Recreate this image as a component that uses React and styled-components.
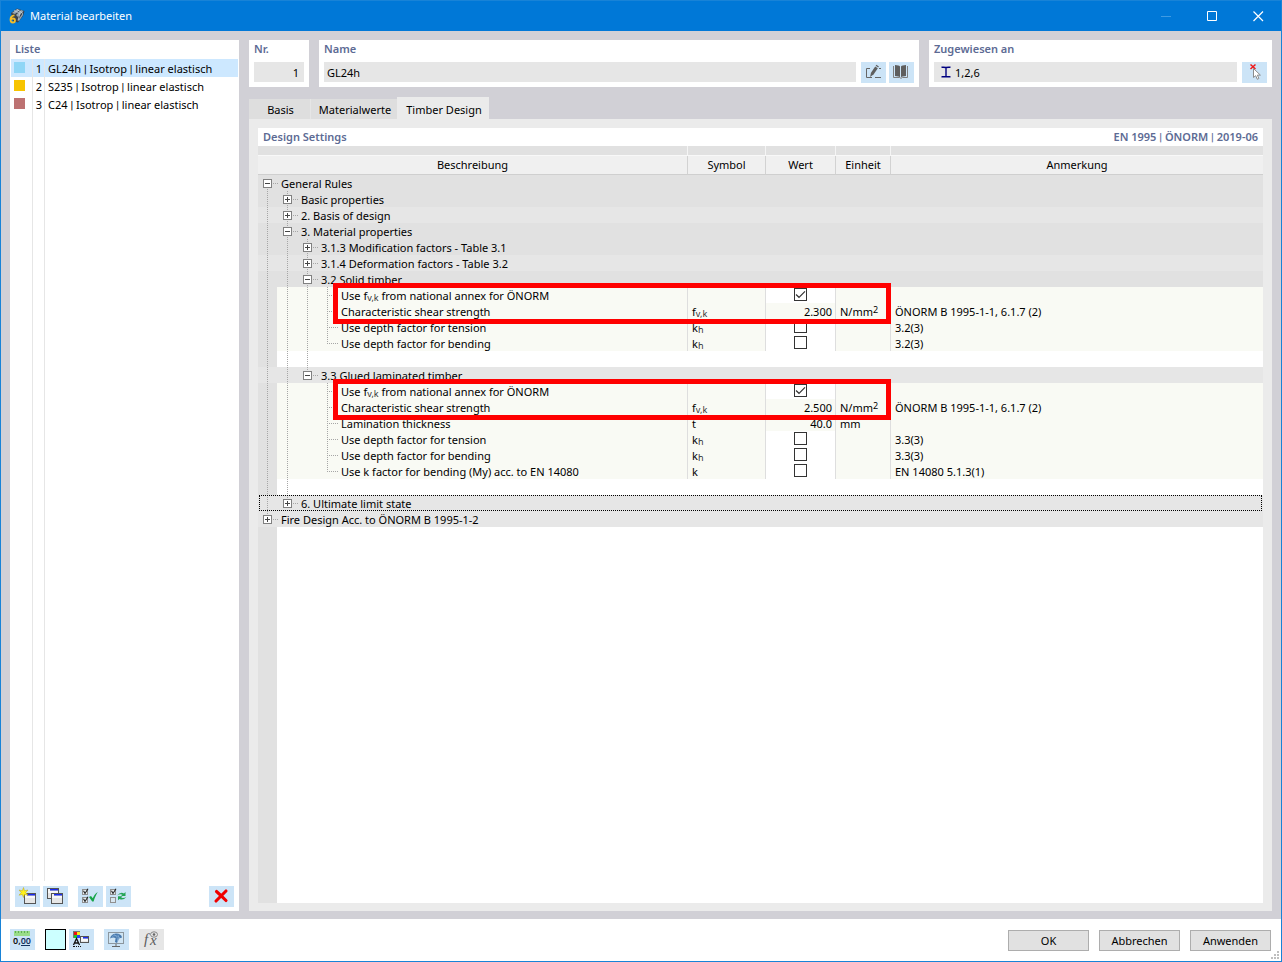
import React from "react";
import styled, { createGlobalStyle, css } from "styled-components";

const GlobalStyle = createGlobalStyle`
  * { box-sizing: border-box; }
  body { margin: 0; }
  body, button, input, table {
    font-family: "Noto Sans", "Open Sans", sans-serif;
    font-size: 11px;
    line-height: 16px;
    color: #000;
  }
`;

const c = {
  frame: "#1883d7",
  title: "#0078d7",
  desk: "#d1d0d6",
  field: "#e6e6e6",
  group: "#e1e1e1",
  groupLight: "#e6e6e6",
  leaf: "#f9faf4",
  tool: "#cce4f7",
  caption: "#5d6b94",
  line: "#dedede",
  dot: "#a6a6a6",
};

/* ---------- window ---------- */
const Window = styled.div`
  display: flex;
  flex-direction: column;
  min-height: 100vh;
  border: 1px solid ${c.frame};
  background: #fff;
`;
const TitleBar = styled.header`
  display: flex;
  align-items: center;
  height: 30px;
  padding-left: 8px;
  background: ${c.title};
  color: #fff;
`;
const TitleText = styled.h1`
  flex: 1;
  margin: 0 0 0 5px;
  font-size: 11px;
  font-weight: 400;
`;
const WindowButton = styled.button`
  display: grid;
  place-items: center;
  width: 46px;
  height: 30px;
  padding: 0;
  border: 0;
  background: transparent;
`;
const Body = styled.main`
  display: flex;
  flex: 1;
  gap: 10px;
  padding: 9px 9px 8px;
  background: ${c.desk};
`;
const Caption = styled.h2`
  margin: 0;
  font-size: 11px;
  font-weight: 600;
  line-height: 18px;
  color: ${c.caption};
`;
/* The bar of Noto Sans is very wide; Roboto has a narrow one. */
const Bar = styled.span`
  font-family: Roboto, sans-serif;
  line-height: 0;
`;

/* ---------- material list ---------- */
const ListPanel = styled.aside`
  display: flex;
  flex-direction: column;
  flex: none;
  width: 229px;
  background: #fff;
`;
const ListCaption = styled(Caption)`
  padding: 0 5px;
  margin-bottom: 1px;
`;
const List = styled.ul`
  flex: 1;
  margin: 0 1px;
  padding: 0;
  list-style: none;
  background:
    linear-gradient(${c.field}, ${c.field}) 21px 0 / 1px 100% no-repeat,
    linear-gradient(${c.field}, ${c.field}) 33px 0 / 1px 100% no-repeat;
`;
const ListItem = styled.li`
  display: grid;
  grid-template-columns: 22px 12px 1fr;
  height: 18px;
  line-height: 20px;
  background: ${(p) => (p.$selected ? "#cde8ff" : "transparent")};
`;
const SwatchCell = styled.span`
  padding: 3px 0 0 3px;
  border-right: 1px solid ${c.field};
`;
const Swatch = styled.span`
  display: block;
  width: 11px;
  height: 11px;
  background: ${(p) => p.$color};
`;
const NumberCell = styled.span`
  padding-right: 2px;
  border-right: 1px solid ${c.field};
  text-align: right;
`;
const NameCell = styled.span`
  padding-left: 3px;
  white-space: nowrap;
`;
const ListTools = styled.div`
  display: flex;
  gap: 3px;
  padding: 5px 5px 4px;
`;
const ToolGap = styled.span`
  width: ${(p) => p.$w}px;
`;
const Spacer = styled.span`
  flex: 1;
`;
const ToolButton = styled.button`
  flex: none;
  width: 25px;
  height: 21px;
  padding: 0;
  border: 0;
  background: ${(p) => (p.disabled ? c.field : c.tool)};
  svg { display: block; }
`;

/* ---------- right side ---------- */
const Content = styled.div`
  display: flex;
  flex: 1;
  flex-direction: column;
  min-width: 0;
`;
const Cards = styled.div`
  display: flex;
  gap: 10px;
  margin-bottom: 10px;
`;
const Card = styled.section`
  flex: ${(p) => p.$flex};
  min-width: 0;
  height: 47px;
  padding: 0 5px;
  background: #fff;
`;
const CardLabel = styled.label`
  display: block;
  margin-bottom: 4px;
  font-weight: 600;
  line-height: 18px;
  color: ${c.caption};
`;
const FieldRow = styled.div`
  display: flex;
  gap: 3px;
`;
const Field = styled.div`
  display: flex;
  flex: 1;
  align-items: center;
  gap: 4px;
  min-width: 0;
  height: 20px;
  margin-right: ${(p) => (p.$last ? 0 : 2)}px;
  padding: 0 ${(p) => p.$pad || 3}px;
  background: ${c.field};
`;
const FieldInput = styled.input`
  flex: 1;
  width: 100%;
  min-width: 0;
  height: 20px;
  padding: 1px 0 0;
  border: 0;
  outline: 0;
  background: transparent;
  text-align: ${(p) => (p.$right ? "right" : "left")};
`;
const Tabs = styled.div`
  display: flex;
  align-items: flex-end;
  height: 22px;
`;
const Tab = styled.button`
  width: ${(p) => p.$w}px;
  height: ${(p) => (p.$active ? 22 : 20)}px;
  padding: ${(p) => (p.$active ? 4 : 2)}px 0 0 2px;
  border: 0;
  border-right: ${(p) => (p.$divider ? `1px solid ${c.field}` : 0)};
  background: ${(p) => (p.$active ? "#ebebeb" : "#dedede")};
  line-height: 16px;
  white-space: nowrap;
`;
const TabPanel = styled.section`
  display: flex;
  flex: 1;
  flex-direction: column;
  padding: 9px 9px 8px;
  background: #ebebeb;
`;
const PanelHead = styled.div`
  display: flex;
  justify-content: space-between;
  padding: 0 5px;
  background: #fff;
`;

/* ---------- settings table ---------- */
const Grid = styled.table`
  width: 100%;
  table-layout: fixed;
  border-collapse: separate;
  border-spacing: 0;
  td, th { padding: 0; }
`;
const Col = styled.col`
  width: ${(p) => (p.$w ? `${p.$w}px` : "auto")};
`;
const BandCell = styled.td`
  height: 10px;
  border-right: 1px solid #f5f5f5;
  border-bottom: 1px solid #f8f8f8;
  background: ${c.group};
  line-height: 0;
  &:last-child { border-right: 0; }
`;
const HeadCell = styled.th`
  height: 19px;
  border-right: 1px solid #d2d2d2;
  border-bottom: 1px solid #cfcfcf;
  background: #f0f0f0;
  font-weight: 400;
  line-height: 18px;
  &:last-child { border-right: 0; }
`;
const GroupCell = styled.td`
  height: 16px;
  background: ${(p) => (p.$light ? c.groupLight : c.group)};
`;
const gutter = (fill) => css`
  background: linear-gradient(to right, ${c.group} 19px, ${fill} 19px);
`;
const BlankCell = styled.td`
  height: 16px;
  ${gutter("#fff")}
`;
const NameTd = styled.td`
  position: relative;
  height: 16px;
  border-right: 1px solid ${c.line};
  ${gutter(c.leaf)}
`;
const Td = styled.td`
  height: 16px;
  border-right: ${(p) => (p.$last ? "0" : `1px solid ${c.line}`)};
  background: ${(p) => (p.$edit ? "#fff" : c.leaf)};
  text-align: ${(p) => p.$align || "left"};
`;
const CellText = styled.div`
  height: 16px;
  padding: 1px 3px 0 4px;
  line-height: 16px;
  white-space: nowrap;
`;
/* The focus frame stays one pixel inside the row on both sides. */
const TreeLine = styled.div`
  display: flex;
  height: 16px;
  white-space: nowrap;
  ${(p) => p.$focus && css`
    margin: 0 1px;
    outline: 1px dotted #000;
    outline-offset: -1px;
    > :first-child {
      margin-left: -1px;
    }
  `}
`;
const TreeText = styled.span`
  padding: 1px 0 0 3px;
  line-height: 16px;
`;
const vDots = `repeating-linear-gradient(to bottom, ${c.dot} 0 1px, transparent 1px 2px)`;
const hDots = `repeating-linear-gradient(to right, ${c.dot} 0 1px, transparent 1px 2px)`;
const guideBackground = {
  "|": `${vDots} 9px 0 / 1px 16px no-repeat`,
  " ": "none",
  T: `${vDots} 9px 0 / 1px 16px no-repeat, ${hDots} 9px 8px / 11px 1px no-repeat`,
  L: `${vDots} 9px 0 / 1px 9px no-repeat, ${hDots} 9px 8px / 11px 1px no-repeat`,
  first: `${vDots} 9px 8px / 1px 8px no-repeat, ${hDots} 15px 8px / 5px 1px no-repeat`,
  middle: `${vDots} 9px 0 / 1px 16px no-repeat, ${hDots} 15px 8px / 5px 1px no-repeat`,
  last: `${vDots} 9px 0 / 1px 8px no-repeat, ${hDots} 15px 8px / 5px 1px no-repeat`,
};
const Guide = styled.span`
  flex: none;
  width: 20px;
  height: 16px;
  padding: 4px 0 0 5px;
  background: ${(p) => guideBackground[p.$kind]};
`;
const Expander = styled.button`
  display: block;
  width: 9px;
  height: 9px;
  padding: 0;
  border: 1px solid #808080;
  background:
    linear-gradient(#444, #444) 1px 3px / 5px 1px no-repeat,
    ${(p) => (p.$open ? "" : "linear-gradient(#444, #444) 3px 1px / 1px 5px no-repeat,")}
    linear-gradient(#fff, #fff);
`;
const Sub = styled.sub`
  position: relative;
  top: 1px;
  font-size: 9px;
  line-height: 0;
  vertical-align: baseline;
  color: #333;
`;
const Sup = styled.sup`
  position: relative;
  top: -3px;
  font-size: 9px;
  line-height: 0;
  vertical-align: baseline;
`;
const CheckBox = styled.span`
  display: grid;
  justify-content: center;
  height: 16px;
  padding-top: 1px;
  input, svg { grid-area: 1 / 1; }
  input {
    appearance: none;
    width: 13px;
    height: 13px;
    margin: 0;
    border: 1px solid #333;
    background: #fff;
  }
  svg { pointer-events: none; }
`;
/* Marks two rows, from the name column to the end of the unit column. */
const Highlight = styled.span`
  position: absolute;
  z-index: 1;
  top: -4px;
  left: 75px;
  width: 558px;
  height: 41px;
  border: 5px solid #f00;
  pointer-events: none;
`;
const Filler = styled.div`
  flex: 1;
  ${gutter("#fff")}
`;

/* ---------- footer ---------- */
const Footer = styled.footer`
  display: flex;
  align-items: flex-start;
  height: 42px;
  padding: 10px 2px 0 9px;
  background: #fff;
`;
const ColorButton = styled.button`
  width: 21px;
  height: 21px;
  margin-right: 3px;
  padding: 0;
  border: 1px solid #000;
  background: #cff;
`;
const Actions = styled.div`
  display: flex;
  gap: 10px;
  padding-top: 1px;
`;
const ActionButton = styled.button`
  width: 81px;
  height: 21px;
  padding: 1px 0 0;
  border: 1px solid #adadad;
  background: #e1e1e1;
  line-height: 16px;
`;
const Grip = styled.svg`
  align-self: flex-end;
  margin-bottom: 2px;
`;

/* ---------- icons ---------- */
const Icon = ({ children }) => (
  <svg width="25" height="21" viewBox="0 0 25 21" aria-hidden="true">{children}</svg>
);
const MiniWindow = ({ x, y, w = 12, h = 11 }) => (
  <g shapeRendering="crispEdges">
    <rect x={x} y={y} width={w} height={h} fill="#555" />
    <rect x={x + 1} y={y + 1} width={w - 2} height={h - 2} fill="#e6e6e6" />
    <rect x={x + 1} y={y + 1} width={w - 2} height="2" fill="#7d86d8" />
    <rect x={x + 3} y={y + 1} width={w - 4} height="1" fill="#1c2cf0" />
    <rect x={x + 1} y={y + 1} width="2" height="2" fill="#f4f4f4" />
    <rect x={x + 1} y={y + 3} width={w - 2} height="2" fill="#f8f8f8" />
  </g>
);
const TinyBox = ({ y, on }) => (
  <g>
    <rect x="4.5" y={y + 0.5} width="5" height="5" fill={on ? "#e8eef2" : "#d7e6f0"} stroke="#909090" />
    {on && <path d={`M5.5 ${y + 1.800}l1.500 2.700l3-4.700`} fill="none" stroke="#222" strokeWidth="1.100" />}
  </g>
);
const NewIcon = () => (
  <Icon>
    <MiniWindow x={9} y={7} />
    <path d="M8.500 1.500l1 3.300l3.500-.8l-2.300 2.500l2.300 2.700l-3.500-.8l-1 3.100l-1.200-3.100l-3.300.8l2.200-2.700l-2.200-2.500l3.300.8z" fill="#fff21a" stroke="#b8a020" strokeWidth=".5" />
  </Icon>
);
const CopyIcon = () => (
  <Icon><MiniWindow x={4} y={2} /><MiniWindow x={8} y={7} /></Icon>
);
const CheckAllIcon = () => (
  <Icon>
    <TinyBox y={3} on /><TinyBox y={11} on />
    <path d="M11 11l2-1l1.800 2.300c1-2.600 2.500-4.800 4.900-6.300c-1.700 2.900-3 5.800-4.100 9.500h-1.400z" fill="#17a54a" />
  </Icon>
);
const ToggleIcon = () => (
  <Icon>
    <TinyBox y={3} on /><TinyBox y={11} />
    <path d="M11 9.500q3.500-4 7-2l1.500-1.500v4h-4.500l1.500-1.300q-2.500-1-5.500.8zM20.500 10.700q-3 4-7 2.300l-1.500 1.300v-4h4.500l-1.400 1.300q2.500 1 5.400-.9z" fill="#23a455" />
  </Icon>
);
const DeleteIcon = () => (
  <Icon><path d="M7.500 5.500q4 3.500 9.500 9M17 5l-10 10" fill="none" stroke="#f00000" strokeWidth="3.100" strokeLinecap="round" /></Icon>
);
const EditIcon = () => (
  <Icon>
    <path d="M9 6.500H5.500v9H11M14 15.500h6M18 6.500h2" fill="none" stroke="#666" />
    <path d="M9 15l1-4.200l4.200-6.300l2.600 1.700l-4.300 6.400z" fill="#5e5e5e" />
    <path d="M14.700 3.700l.7-1l2.500 1.700l-.7 1z" fill="#5e5e5e" />
  </Icon>
);
const BookIcon = () => (
  <Icon>
    <path d="M4.500 4v11.500h6l1.500.8l1.500-.8h5V4" fill="none" stroke="#808080" />
    <path d="M6 3q4 0 5 1.500v11Q10 14 6 14zM17 3q-4 0-5 1.500v11Q13 14 17 14z" fill="#5e5e5e" />
  </Icon>
);
const PickIcon = () => (
  <Icon>
    <path d="M8.500 2.500l5 4.500M13.500 2.500l-5 4.500" stroke="#f01818" strokeWidth="1.500" />
    <path d="M11.500 6.500v9l2.200-1.800l1.600 3.600l1.600-.8l-1.500-3.400h3z" fill="#fff" stroke="#8c8c8c" />
  </Icon>
);
const SectionIcon = () => (
  <svg width="10" height="12" viewBox="0 0 10 12" aria-hidden="true">
    <path d="M.5 1.300Q3 1 5 1.500Q7 1 9.500 1.300M.5 10.700Q3 11 5 10.500Q7 11 9.500 10.700M5 1v10" fill="none" stroke="#000080" strokeWidth="1.400" />
  </svg>
);
const UnitsIcon = () => (
  <Icon>
    <rect x="4" y="2" width="16" height="5" fill="#98dc88" />
    <path d="M5.500 2v2M8.500 2v2M11.500 2v2M14.500 2v2M17.500 2v2" stroke="#5fae55" />
    <text x="3" y="15" fontSize="9" fontWeight="600" fill="#111">0,<tspan fill="#15315e">00</tspan></text>
    <path d="M11 16.500h9" stroke="#15315e" />
  </Icon>
);
const DisplayIcon = () => (
  <Icon>
    <g shapeRendering="crispEdges">
      <rect x="4" y="2" width="7" height="7" fill="#777" />
      <rect x="5" y="3" width="3" height="3" fill="#f01010" /><rect x="8" y="3" width="3" height="3" fill="#f6e91c" />
      <rect x="5" y="6" width="3" height="3" fill="#18c92d" /><rect x="8" y="6" width="3" height="3" fill="#2840ff" />
      <path d="M4 17h2v1h-2zM7 17h1v1h-1zM9 17h1v1h-1zM11 17h1v1h-1z" fill="#111" />
    </g>
    <path d="M4.500 16l3-6.500l3 6.500M5.500 14h4" fill="none" stroke="#111" strokeWidth="1.300" />
    <MiniWindow x={11} y={7} w={9} h={7} />
  </Icon>
);
const MonitorIcon = () => (
  <Icon>
    <rect x="4.500" y="3.500" width="15" height="11" fill="#d0e5f4" stroke="#8b969e" />
    <path d="M12 15v2M8 17.500h8" stroke="#666" />
    <path d="M6 9.500q1-4.500 6-5q5.500.3 6 4l-3 1l-2 4.500l-2-1l.6-4q-3-1-5.600.5z" fill="#4779ae" />
    <path d="M8 7.500q4-2.500 8 1.500M10 5.500q4 2 3.500 7M14 5.500q2 3-.5 7" fill="none" stroke="#90b7dc" strokeWidth=".6" />
  </Icon>
);
const FormulaIcon = () => (
  <Icon>
    <text x="5" y="15" fontSize="15" fontStyle="italic" fontFamily="Liberation Serif, serif" fill="#5c5c5c">f</text>
    <text x="11" y="16" fontSize="15" fontStyle="italic" fontFamily="Liberation Serif, serif" fill="#5c5c5c">x</text>
    <ellipse cx="15" cy="5.500" rx="3.500" ry="2.700" fill="none" stroke="#888" />
    <circle cx="15" cy="5.500" r="1.300" fill="#666" />
  </Icon>
);
const AppIcon = () => (
  <svg width="16" height="16" viewBox="0 0 16 16" aria-hidden="true">
    <path d="M2 5l6-4.500l7.500 2.500l-1.500 5l-5 6.500l-5-1.500z" fill="#39434e" />
    <path d="M3 5l5-4l3 1l-5 4zM7 7l5-5l2.500 1l-5.500 6zM9 12l5-7v2l-4 6z" fill="#98a7b4" />
    <path d="M5 2.500l6 3l-2 7M8 1.500l6 4" fill="none" stroke="#d4dbe0" strokeWidth=".7" />
    <path d="M5.500 7.300Q1.500 7.500 1.500 11.500Q1.500 14.500 3.800 14.500Q6 14.500 6 12.400Q6 10.500 4 10.500Q2.200 10.500 1.700 12" fill="none" stroke="#f3bd28" strokeWidth="1.800" />
  </svg>
);

/* ---------- data ---------- */
const materials = [
  { color: "#8fd6f6", name: "GL24h | Isotrop | linear elastisch", selected: true },
  { color: "#f7c400", name: "S235 | Isotrop | linear elastisch" },
  { color: "#bd7272", name: "C24 | Isotrop | linear elastisch" },
];
const fvk = <>f<Sub>v,k</Sub></>;
const kh = <>k<Sub>h</Sub></>;
const nmm = <>N/mm<Sup>2</Sup></>;
const annex = <>Use {fvk} from national annex for ÖNORM</>;
const rows = [
  { group: "General Rules", guides: "", node: "first", open: true },
  { group: "Basic properties", guides: "|", node: "middle" },
  { group: "2. Basis of design", guides: "|", node: "middle", light: true },
  { group: "3. Material properties", guides: "|", node: "middle", open: true },
  { group: "3.1.3 Modification factors - Table 3.1", guides: "||", node: "middle" },
  { group: "3.1.4 Deformation factors - Table 3.2", guides: "||", node: "middle", light: true },
  { group: "3.2 Solid timber", guides: "||", node: "middle", open: true },
  { name: annex, guides: "|||T", check: true, label: "Use fv,k from national annex, solid timber", mark: true },
  { name: "Characteristic shear strength", guides: "|||T", symbol: fvk, value: "2.300", unit: nmm, note: "ÖNORM B 1995-1-1, 6.1.7 (2)" },
  { name: "Use depth factor for tension", guides: "|||T", symbol: kh, check: false, label: "Use depth factor for tension, solid timber", note: "3.2(3)" },
  { name: "Use depth factor for bending", guides: "|||L", symbol: kh, check: false, label: "Use depth factor for bending, solid timber", note: "3.2(3)" },
  { blank: true, guides: "|||" },
  { group: "3.3 Glued laminated timber", guides: "||", node: "last", open: true, light: true },
  { name: annex, guides: "|| T", check: true, label: "Use fv,k from national annex, glued laminated timber", mark: true },
  { name: "Characteristic shear strength", guides: "|| T", symbol: fvk, value: "2.500", unit: nmm, note: "ÖNORM B 1995-1-1, 6.1.7 (2)" },
  { name: "Lamination thickness", guides: "|| T", symbol: "t", value: "40.0", unit: "mm" },
  { name: "Use depth factor for tension", guides: "|| T", symbol: kh, check: false, label: "Use depth factor for tension, glued laminated timber", note: "3.3(3)" },
  { name: "Use depth factor for bending", guides: "|| T", symbol: kh, check: false, label: "Use depth factor for bending, glued laminated timber", note: "3.3(3)" },
  { name: "Use k factor for bending (My) acc. to EN 14080", guides: "|| L", symbol: "k", check: false, label: "Use k factor for bending", note: "EN 14080 5.1.3(1)" },
  { blank: true, guides: "||" },
  { group: "6. Ultimate limit state", guides: "|", node: "last", light: true, focus: true },
  { group: "Fire Design Acc. to ÖNORM B 1995-1-2", guides: "", node: "last", light: true },
];

const Barred = ({ text }) =>
  text.split("|").map((part, i) => (
    <React.Fragment key={i}>{i > 0 && <Bar>|</Bar>}{part}</React.Fragment>
  ));

const Guides = ({ text }) => [...text].map((k, i) => <Guide key={i} $kind={k} />);

function SettingRow({ row }) {
  if (row.blank) {
    return <tr><BlankCell colSpan={5}><TreeLine><Guides text={row.guides} /></TreeLine></BlankCell></tr>;
  }
  if (row.group) {
    return (
      <tr>
        <GroupCell colSpan={5} $light={row.light}>
          <TreeLine $focus={row.focus}>
            <Guides text={row.guides} />
            <Guide $kind={row.node}>
              <Expander type="button" $open={row.open} aria-expanded={!!row.open} aria-label={row.group} />
            </Guide>
            <TreeText>{row.group}</TreeText>
          </TreeLine>
        </GroupCell>
      </tr>
    );
  }
  const hasCheck = row.check !== undefined;
  return (
    <tr>
      <NameTd>
        <TreeLine><Guides text={row.guides} /><TreeText>{row.name}</TreeText></TreeLine>
        {row.mark && <Highlight />}
      </NameTd>
      <Td><CellText>{row.symbol}</CellText></Td>
      <Td $edit={hasCheck} $align="right">
        {hasCheck ? (
          <CheckBox>
            <input type="checkbox" defaultChecked={row.check} aria-label={row.label} />
            {row.check && (
              <svg width="13" height="13" viewBox="0 0 13 13" aria-hidden="true">
                <path d="M2 6.500l3 2.800l6-6" fill="none" stroke="#333" strokeWidth="1.200" />
              </svg>
            )}
          </CheckBox>
        ) : <CellText>{row.value}</CellText>}
      </Td>
      <Td><CellText>{row.unit}</CellText></Td>
      <Td $last><CellText>{row.note}</CellText></Td>
    </tr>
  );
}

export default function App() {
  return (
    <>
      <GlobalStyle />
      <Window>
        <TitleBar>
          <AppIcon />
          <TitleText>Material bearbeiten</TitleText>
          <WindowButton aria-label="Minimieren" disabled>
            <svg width="11" height="11"><path d="M0 5.500h10" stroke="#3f9be3" /></svg>
          </WindowButton>
          <WindowButton aria-label="Maximieren">
            <svg width="11" height="11"><path d="M.5.500h9v9h-9z" fill="none" stroke="#fff" /></svg>
          </WindowButton>
          <WindowButton aria-label="Schließen">
            <svg width="11" height="11"><path d="M.5.500l9.500 9.500M10 .500l-9.500 9.500" stroke="#fff" strokeWidth="1.200" /></svg>
          </WindowButton>
        </TitleBar>

        <Body>
          <ListPanel>
            <ListCaption>Liste</ListCaption>
            <List>
              {materials.map((m, i) => (
                <ListItem key={m.name} $selected={m.selected}>
                  <SwatchCell><Swatch $color={m.color} /></SwatchCell>
                  <NumberCell>{i + 1}</NumberCell>
                  <NameCell><Barred text={m.name} /></NameCell>
                </ListItem>
              ))}
            </List>
            <ListTools>
              <ToolButton aria-label="Neu"><NewIcon /></ToolButton>
              <ToolButton aria-label="Kopieren"><CopyIcon /></ToolButton>
              <ToolGap $w={4} />
              <ToolButton aria-label="Alle auswählen"><CheckAllIcon /></ToolButton>
              <ToolButton aria-label="Auswahl umkehren"><ToggleIcon /></ToolButton>
              <Spacer />
              <ToolButton aria-label="Löschen"><DeleteIcon /></ToolButton>
            </ListTools>
          </ListPanel>

          <Content>
            <Cards>
              <Card $flex="0 0 60px">
                <CardLabel htmlFor="nr">Nr.</CardLabel>
                <FieldRow><Field $last $pad={5}><FieldInput id="nr" $right defaultValue="1" /></Field></FieldRow>
              </Card>
              <Card $flex="1 1 0">
                <CardLabel htmlFor="name">Name</CardLabel>
                <FieldRow>
                  <Field><FieldInput id="name" defaultValue="GL24h" /></Field>
                  <ToolButton aria-label="Name bearbeiten"><EditIcon /></ToolButton>
                  <ToolButton aria-label="Bibliothek"><BookIcon /></ToolButton>
                </FieldRow>
              </Card>
              <Card $flex="0 0 343px">
                <CardLabel htmlFor="assigned">Zugewiesen an</CardLabel>
                <FieldRow>
                  <Field $pad={7}><SectionIcon /><FieldInput id="assigned" defaultValue="1,2,6" /></Field>
                  <ToolButton aria-label="Auswählen"><PickIcon /></ToolButton>
                </FieldRow>
              </Card>
            </Cards>

            <Tabs role="tablist">
              <Tab role="tab" $w={62} $divider>Basis</Tab>
              <Tab role="tab" $w={86}>Materialwerte</Tab>
              <Tab role="tab" $w={92} $active aria-selected="true">Timber Design</Tab>
            </Tabs>
            <TabPanel>
              <PanelHead>
                <Caption>Design Settings</Caption>
                <Caption as="span"><Barred text="EN 1995 | ÖNORM | 2019-06" /></Caption>
              </PanelHead>
              <Grid>
                <colgroup>
                  <Col $w={430} /><Col $w={78} /><Col $w={70} /><Col $w={55} /><Col />
                </colgroup>
                <thead>
                  <tr><BandCell /><BandCell /><BandCell /><BandCell /><BandCell /></tr>
                  <tr>
                    <HeadCell>Beschreibung</HeadCell>
                    <HeadCell>Symbol</HeadCell>
                    <HeadCell>Wert</HeadCell>
                    <HeadCell>Einheit</HeadCell>
                    <HeadCell>Anmerkung</HeadCell>
                  </tr>
                </thead>
                <tbody>{rows.map((row, i) => <SettingRow key={i} row={row} />)}</tbody>
              </Grid>
              <Filler />
            </TabPanel>
          </Content>
        </Body>

        <Footer>
          <ToolButton aria-label="Einheiten"><UnitsIcon /></ToolButton>
          <ToolGap $w={10} />
          <ColorButton aria-label="Farbe" />
          <ToolButton aria-label="Anzeige"><DisplayIcon /></ToolButton>
          <ToolGap $w={10} />
          <ToolButton aria-label="Ansicht"><MonitorIcon /></ToolButton>
          <ToolGap $w={10} />
          <ToolButton aria-label="Formel" disabled><FormulaIcon /></ToolButton>
          <Spacer />
          <Actions>
            <ActionButton>OK</ActionButton>
            <ActionButton>Abbrechen</ActionButton>
            <ActionButton>Anwenden</ActionButton>
          </Actions>
          <Grip width="8" height="8" aria-hidden="true">
            <path d="M6 0h2v2h-2zM6 3h2v2h-2zM3 3h2v2h-2zM6 6h2v2h-2zM3 6h2v2h-2zM0 6h2v2h-2z" fill="#bfbfbf" />
          </Grip>
        </Footer>
      </Window>
    </>
  );
}
